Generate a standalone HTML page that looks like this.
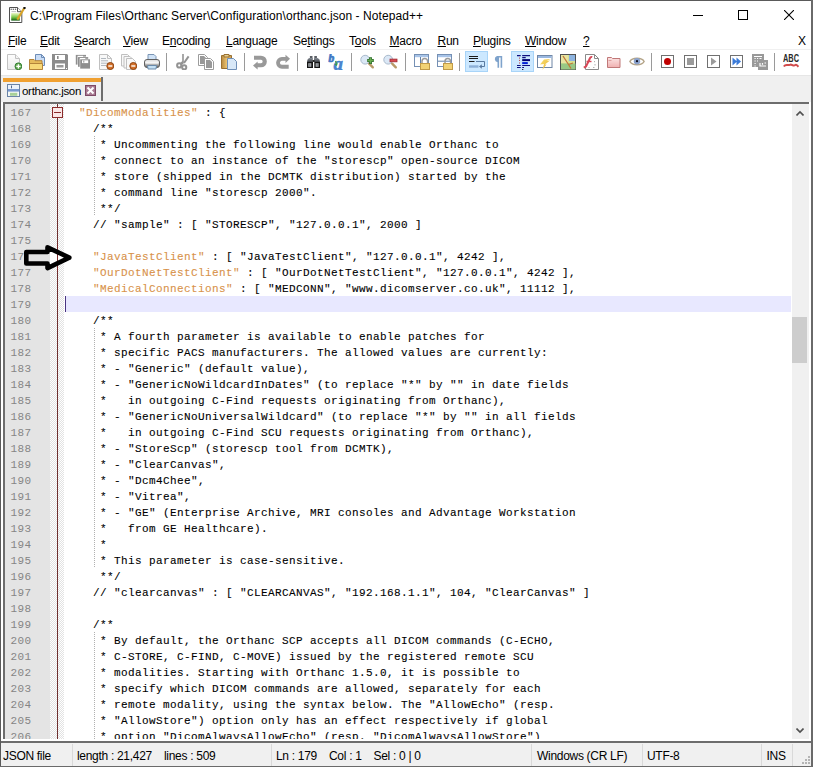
<!DOCTYPE html>
<html><head><meta charset="utf-8"><style>
*{margin:0;padding:0;box-sizing:border-box}
html,body{width:813px;height:767px;overflow:hidden;background:#fff}
body{position:relative;font-family:"Liberation Sans",sans-serif;font-size:12px;color:#000}
.abs{position:absolute}
.title{position:absolute;left:30px;top:6px;font-size:12px;letter-spacing:0.07px;line-height:20px;white-space:pre;color:#000}
.mi{position:absolute;top:32px;line-height:18px;font-size:12px;white-space:pre;letter-spacing:-0.25px}
.mi u{text-decoration:underline;text-underline-offset:1px}
.st{position:absolute;top:747px;line-height:18px;font-size:12px;letter-spacing:-0.3px;white-space:pre;color:#000}
.ssep{position:absolute;top:744px;width:1px;height:22px;background:#d9d9d9}
.ln{position:absolute;left:10.5px;width:40px;height:16px;font-family:"Liberation Mono",monospace;font-size:11px;line-height:16px;padding-top:1px;letter-spacing:0.4px;color:#858585;white-space:pre}
.cl{position:absolute;left:65px;height:16px;font-family:"Liberation Mono",monospace;font-size:11px;line-height:16px;padding-top:1px;letter-spacing:0.4px;color:#000;-webkit-text-stroke:0.1px currentColor;white-space:pre}
.k{color:#d8924a}
.guide{position:absolute;left:94px;width:1px;height:16px;background:repeating-linear-gradient(to bottom,#b0b0b0 0,#b0b0b0 1px,transparent 1px,transparent 2px)}
</style></head><body>
<!-- window border -->
<div class="abs" style="left:0;top:0;width:813px;height:1px;background:#5a5a5a"></div>
<div class="abs" style="left:0;top:0;width:1px;height:767px;background:#5a5a5a"></div>
<div class="abs" style="left:811px;top:0;width:2px;height:767px;background:#6a6a6a"></div>
<div class="abs" style="left:0;top:766px;width:813px;height:1px;background:#6a6a6a"></div>
<!-- title -->
<svg class="abs" style="left:9px;top:7px" width="17" height="17" viewBox="0 0 17 17">
 <defs><linearGradient id="gTi" x1="0" y1="0" x2="0" y2="1"><stop offset="0" stop-color="#eef8c8"/><stop offset="0.55" stop-color="#7cc84a"/><stop offset="1" stop-color="#0e5a0e"/></linearGradient></defs>
 <path d="M0.5 0.5 H8.5 L12.8 4.7 V15.5 H0.5 Z" fill="#fff" stroke="#505050"/>
 <path d="M8.5 0.5 V4.7 H12.8" fill="#fff" stroke="#505050"/>
 <circle cx="2.2" cy="2.3" r="0.75" fill="#606060"/><circle cx="4.3" cy="2.3" r="0.75" fill="#606060"/><circle cx="6.5" cy="2.3" r="0.75" fill="#606060"/>
 <path d="M2.5 4.6 H7" stroke="#c0c0c0"/>
 <rect x="2.2" y="5.9" width="8.6" height="7.7" fill="url(#gTi)"/>
 <path d="M8.3 12.6 L15.3 1" stroke="#d8a428" stroke-width="2.2"/>
 <circle cx="15.5" cy="0.9" r="1.2" fill="#111"/>
</svg>
<div class="title">C:\Program Files\Orthanc Server\Configuration\orthanc.json - Notepad++</div>
<div class="abs" style="left:693px;top:15px;width:10px;height:1px;background:#000"></div>
<div class="abs" style="left:738px;top:10px;width:10px;height:10px;border:1px solid #000"></div>
<svg class="abs" style="left:784px;top:10px" width="10" height="10" viewBox="0 0 10 10"><path d="M0 0L10 10M10 0L0 10" stroke="#000" stroke-width="1.1"/></svg>
<!-- menu -->
<div class="mi" style="left:8px"><u>F</u>ile</div>
<div class="mi" style="left:40px"><u>E</u>dit</div>
<div class="mi" style="left:74px"><u>S</u>earch</div>
<div class="mi" style="left:123px"><u>V</u>iew</div>
<div class="mi" style="left:162px">E<u>n</u>coding</div>
<div class="mi" style="left:226px"><u>L</u>anguage</div>
<div class="mi" style="left:293px">Se<u>t</u>tings</div>
<div class="mi" style="left:349px">T<u>o</u>ols</div>
<div class="mi" style="left:389.5px"><u>M</u>acro</div>
<div class="mi" style="left:437.5px"><u>R</u>un</div>
<div class="mi" style="left:473px"><u>P</u>lugins</div>
<div class="mi" style="left:525px"><u>W</u>indow</div>
<div class="mi" style="left:583px"><u>?</u></div>
<div class="abs" style="left:798px;top:32px;line-height:18px;font-size:12px">X</div>
<div class="abs" style="left:1px;top:49px;width:810px;height:1px;background:#f0f0f0"></div>
<!-- toolbar -->
<svg class="abs" style="left:6px;top:54px" width="16" height="16" viewBox="0 0 16 16">
<defs><linearGradient id="gNew" x1="0" y1="0" x2="0" y2="1"><stop offset="0" stop-color="#fdfdfd"/><stop offset="1" stop-color="#ececec"/></linearGradient></defs>
<path d="M1.5 0.5h8l4 4v11h-12z" fill="url(#gNew)" stroke="#c2c2c2"/>
<path d="M9.5 0.5v4h4" fill="#f4f4f4" stroke="#c2c2c2"/>
<circle cx="12.4" cy="12.3" r="3.4" fill="#6aae55" stroke="#2f7d32" stroke-width="1"/>
<path d="M12.4 10.2v4.2M10.3 12.3h4.2" stroke="#fff" stroke-width="1.3"/>
</svg>
<svg class="abs" style="left:29px;top:54px" width="16" height="16" viewBox="0 0 16 16">
<path d="M6.5 0.5h6l3 3v8h-9z" fill="#c9dcf5" stroke="#6d8db8"/>
<path d="M12.5 0.5v3h3" fill="none" stroke="#6d8db8"/>
<path d="M0.5 5.5h4.5l1 1.2h7v8.8h-12.5z" fill="#e6bc5c" stroke="#b4843a"/>
<path d="M0.5 9.5h13v6h-13z" fill="#f7d978" stroke="#b4843a"/>
</svg>
<svg class="abs" style="left:52px;top:54px" width="16" height="16" viewBox="0 0 16 16">
<path d="M0 0h15l1 1v15h-16z" fill="#8c8c8c"/>
<rect x="3" y="1" width="10" height="5" fill="#fff"/>
<rect x="5" y="2" width="1.6" height="3" fill="#8c8c8c"/>
<rect x="3" y="9.5" width="10" height="5.5" fill="#fff"/>
<rect x="4.5" y="11" width="7" height="2.5" fill="#9a9a9a"/>
<rect x="14" y="14" width="1" height="1" fill="#fff"/>
</svg>
<svg class="abs" style="left:75px;top:54px" width="16" height="16" viewBox="0 0 16 16">
<rect x="0.8" y="0.9" width="10.2" height="9.7" fill="#8e8e8e"/>
<rect x="2.6" y="1.8" width="5.5" height="1.3" fill="#fff"/>
<rect x="2.5" y="2.6" width="11.2" height="10.7" fill="#fff"/>
<rect x="3" y="3.1" width="10.2" height="9.7" fill="#8e8e8e"/>
<rect x="4.8" y="4" width="5.5" height="1.3" fill="#fff"/>
<rect x="4.7" y="4.8" width="11" height="10.5" fill="#fff"/>
<rect x="5.2" y="5.3" width="9.8" height="9.3" fill="#8e8e8e"/>
<rect x="7" y="6.3" width="6.2" height="2.8" fill="#fff"/>
<rect x="8.3" y="6.6" width="1" height="2" fill="#8e8e8e"/>
</svg>
<svg class="abs" style="left:98px;top:54px" width="16" height="16" viewBox="0 0 16 16">
<path d="M1.5 0.5h8l4 4v11h-12z" fill="#f8f8f8" stroke="#c0c0c0"/>
<path d="M9.5 0.5v4h4" fill="none" stroke="#c0c0c0"/>
<path d="M3 4.5h5M3 6.8h7M3 9.2h7M3 11.5h5" stroke="#a8b0b8" stroke-width="0.9"/>
<circle cx="12.3" cy="12" r="3.5" fill="#d2702a" stroke="#8f4410" stroke-width="1"/>
<path d="M10.3 12h4" stroke="#fff" stroke-width="1.4"/>
</svg>
<svg class="abs" style="left:121px;top:54px" width="16" height="16" viewBox="0 0 16 16">
<path d="M0.5 0.5h6l2.5 2.5v9h-8.5z" fill="#f8f8f8" stroke="#c0c0c0"/>
<path d="M3 2.5h6l2.5 2.5v9h-8.5z" fill="#f8f8f8" stroke="#c0c0c0"/>
<path d="M5.5 4.5h6l3 3v8h-9z" fill="#f8f8f8" stroke="#c0c0c0"/>
<circle cx="12.3" cy="12" r="3.5" fill="#d2702a" stroke="#8f4410" stroke-width="1"/>
<path d="M10.3 12h4" stroke="#fff" stroke-width="1.4"/>
</svg>
<svg class="abs" style="left:144px;top:54px" width="16" height="16" viewBox="0 0 16 16">
<defs><linearGradient id="gPr" x1="0" y1="0" x2="0" y2="1"><stop offset="0" stop-color="#d8d8d8"/><stop offset="0.35" stop-color="#f4f4f4"/><stop offset="0.7" stop-color="#a0a0a0"/><stop offset="1" stop-color="#606060"/></linearGradient></defs>
<path d="M4 0.5h6l2 2v5h-8z" fill="#cfe2f6" stroke="#7a94b4"/>
<rect x="0.5" y="5.5" width="15" height="8" rx="2.5" fill="url(#gPr)" stroke="#606060"/>
<rect x="2" y="8.5" width="12" height="1" fill="#ffffff" opacity="0.8"/>
<path d="M3.5 11.5h9l-0.5 3.5h-8z" fill="#c4e0f4" stroke="#6a8aaa"/>
</svg>
<svg class="abs" style="left:175px;top:54px" width="16" height="16" viewBox="0 0 16 16">
<path d="M8 0 V8.5" stroke="#939393" stroke-width="1.6"/>
<path d="M13.6 2.4 L9 9" stroke="#939393" stroke-width="2"/>
<path d="M8.2 8 L6 10" stroke="#939393" stroke-width="2.5"/>
<circle cx="4.2" cy="11.4" r="2.1" fill="none" stroke="#939393" stroke-width="2"/>
<circle cx="9.2" cy="13.3" r="2.1" fill="none" stroke="#939393" stroke-width="2"/>
</svg>
<svg class="abs" style="left:198px;top:54px" width="16" height="16" viewBox="0 0 16 16">
<path d="M0.5 0.5 H6.5 L9.5 3.5 V11.5 H0.5 Z" fill="#fff" stroke="#9c9c9c"/>
<path d="M2 2 H6 L8 4 V10 H2 Z" fill="#999"/>
<path d="M6.5 4.5 H12.5 L15.5 7.5 V15.5 H6.5 Z" fill="#fff" stroke="#9c9c9c"/>
<path d="M8 6 H12 L14 8 V14 H8 Z" fill="#999"/>
</svg>
<svg class="abs" style="left:221px;top:54px" width="16" height="16" viewBox="0 0 16 16">
<defs><linearGradient id="gCb" x1="0" y1="0" x2="1" y2="0"><stop offset="0" stop-color="#b88a40"/><stop offset="0.5" stop-color="#e8c070"/><stop offset="1" stop-color="#c89850"/></linearGradient></defs>
<path d="M0.5 1.5h10v13h-10z" fill="url(#gCb)" stroke="#9a7030"/>
<path d="M3 0.5h5v2.5h-5z" fill="#e8d090" stroke="#9a7030"/>
<path d="M6.5 4.5h6l3 3v8h-9z" fill="#d8e8f8" stroke="#7090b8"/>
</svg>
<svg class="abs" style="left:252px;top:54px" width="16" height="16" viewBox="0 0 16 16">
<path d="M2 3.75 H9 A3.75 3.75 0 0 1 9 11.25 H5" fill="none" stroke="#999" stroke-width="4.2"/>
<path d="M1 11.6 L5.6 7.6 V15.6 Z" fill="#999"/>
</svg>
<svg class="abs" style="left:275px;top:54px" width="16" height="16" viewBox="0 0 16 16">
<path d="M11 4.95 H6.9 A3.9 3.9 0 0 0 6.9 12.75 H13.7" fill="none" stroke="#999" stroke-width="3.8"/>
<path d="M15 4.8 L10.5 0.8 V8.9 Z" fill="#999"/>
</svg>
<svg class="abs" style="left:305px;top:54px" width="16" height="16" viewBox="0 0 16 16">
<defs><linearGradient id="gBn" x1="0" y1="0" x2="0" y2="1"><stop offset="0" stop-color="#8a9098"/><stop offset="1" stop-color="#3a3e44"/></linearGradient></defs>
<path d="M4.9 2h2.6v3h-2.6zM9.3 2h2.6v3h-2.6z" fill="#5a5e64"/>
<path d="M2.5 5.5 L4 4 H7.8 V8 H2 Z M9 4 H12.8 L14.5 5.5 L15 8 H9 Z" fill="url(#gBn)"/>
<path d="M7.5 6h2v2h-2z" fill="#2a2a2a"/>
<path d="M2 8h6v6h-6zM9.3 8h5.7v6h-5.7z" fill="#141414"/>
<rect x="3.3" y="9.2" width="3" height="3.6" fill="#b0b4b8"/>
<rect x="10.6" y="9.2" width="3" height="3.6" fill="#b0b4b8"/>
<rect x="4.3" y="9.2" width="1" height="3.6" fill="#707478"/>
<rect x="11.6" y="9.2" width="1" height="3.6" fill="#707478"/>
</svg>
<svg class="abs" style="left:328px;top:54px" width="16" height="16" viewBox="0 0 16 16">
<text x="0.6" y="7.7" font-family="Liberation Serif" font-style="italic" font-weight="bold" font-size="11.5" fill="#3f78c4" stroke="#3f78c4" stroke-width="0.7">b</text>
<text x="5.6" y="15.6" font-family="Liberation Serif" font-style="italic" font-weight="bold" font-size="19" fill="#4a86d0" stroke="#3c78c8" stroke-width="0.4">a</text>
<path d="M7.5 7 L8.6 9.8" stroke="#4aa050" stroke-width="1.4"/>
<path d="M6.2 10.6 L9.8 9.2 L8.8 12 Z" fill="#3e9a48"/>
</svg>
<svg class="abs" style="left:360px;top:54px" width="16" height="16" viewBox="0 0 16 16">
<circle cx="5.2" cy="5.7" r="4.4" fill="#dbe8f6" stroke="#a9b9cb" stroke-width="1"/>
<path d="M9.2 9.7 L12.8 13.3" stroke="#b89a68" stroke-width="2.4" stroke-linecap="round"/>
<path d="M7.2 6.6h6.6M10.5 3.3v6.6" stroke="#2f6e2f" stroke-width="3"/>
<path d="M7.8 6.6h5.4M10.5 3.9v5.4" stroke="#6aae50" stroke-width="1.5"/>
</svg>
<svg class="abs" style="left:383px;top:54px" width="16" height="16" viewBox="0 0 16 16">
<circle cx="5.2" cy="5.7" r="4.4" fill="#dbe8f6" stroke="#a9b9cb" stroke-width="1"/>
<path d="M9.2 9.7 L12.8 13.3" stroke="#b89a68" stroke-width="2.4" stroke-linecap="round"/>
<rect x="7" y="5.1" width="7" height="2.7" fill="#d84850" stroke="#a02830" stroke-width="0.8"/>
</svg>
<svg class="abs" style="left:414px;top:54px" width="16" height="16" viewBox="0 0 16 16">
<rect x="0.5" y="0.5" width="14" height="12" fill="#fff" stroke="#7590b4"/>
<rect x="1" y="1" width="13" height="2.2" fill="#a8c4e8"/>
<path d="M6.5 3v9.5" stroke="#6080a8"/>
<path d="M8 9 V7.2 A2.8 2.8 0 0 1 13.6 7.2 V9" fill="none" stroke="#9a9a9a" stroke-width="1.5"/>
<rect x="6.5" y="9.5" width="9" height="6" fill="#f2d274" stroke="#c09a48"/>
</svg>
<svg class="abs" style="left:437px;top:54px" width="16" height="16" viewBox="0 0 16 16">
<rect x="0.5" y="0.5" width="14" height="12" fill="#fff" stroke="#7590b4"/>
<rect x="1" y="1" width="13" height="2.2" fill="#a8c4e8"/>
<path d="M1 7.2h13.5" stroke="#6080a8"/>
<path d="M8 9 V7.2 A2.8 2.8 0 0 1 13.6 7.2 V9" fill="none" stroke="#9a9a9a" stroke-width="1.5"/>
<rect x="6.5" y="9.5" width="9" height="6" fill="#f2d274" stroke="#c09a48"/>
</svg>
<div class="abs" style="left:465px;top:51px;width:23px;height:21px;background:#cce8ff;border:1px solid #a8d4f8"></div>
<div class="abs" style="left:511px;top:51px;width:23px;height:21px;background:#cce8ff;border:1px solid #a8d4f8"></div>
<svg class="abs" style="left:467px;top:54px" width="19" height="16" viewBox="0 0 19 16">
<path d="M2 2.5h9M2 4.5h9M2 7.5h5.5" stroke="#1a1a1a" stroke-width="1"/>
<path d="M9 7.5h8.5V12.5H14" fill="none" stroke="#5a7aa0" stroke-width="1"/>
<path d="M12 12.5 L14.8 10.2 V14.8Z" fill="#5a7aa0"/>
<rect x="2" y="11.3" width="9.5" height="2.4" fill="#8cb0d8"/>
</svg>
<svg class="abs" style="left:491px;top:54px" width="16" height="16" viewBox="0 0 16 16">
<path d="M6 2h5.2v11.7h-1.6V3.5h-1.5v10.2H6.5V8.2 A3.2 3.2 0 0 1 6 2z" fill="#7fa3cc"/>
</svg>
<svg class="abs" style="left:514px;top:54px" width="16" height="16" viewBox="0 0 16 16">
<path d="M3 1.6h3.7M8.2 1.6h8.5M8.2 3.6h3.5M3 11.5h3.7M8.2 11.5h8.5M3 13.5h3.7M8.2 13.5h1.8" stroke="#101080" stroke-width="1.1"/>
<rect x="8.2" y="5.1" width="8.5" height="2" fill="#000070"/>
<rect x="8.2" y="8.1" width="5.6" height="2" fill="#0020d8"/>
<path d="M5.5 3.6v1M5.5 5.9v1M5.5 8.5v1" stroke="#c04040" stroke-width="1"/>
<rect x="8.1" y="15" width="1.2" height="1" fill="#101030"/>
</svg>
<svg class="abs" style="left:537px;top:54px" width="16" height="16" viewBox="0 0 16 16">
<defs><linearGradient id="gBolt" x1="0" y1="0" x2="1" y2="1"><stop offset="0" stop-color="#f8e070"/><stop offset="1" stop-color="#e8b030"/></linearGradient></defs>
<rect x="0.5" y="1.5" width="14.5" height="12" fill="#fff" stroke="#6f86a6"/>
<rect x="1" y="2" width="13.5" height="2" fill="#9ab8e0"/>
<path d="M13.5 5 L7 5.5 L3 10.5 L7 10 L5.5 15.8 L9.5 10.5 L7.8 10.5 L13 6.5 L9.5 7 Z" fill="url(#gBolt)"/>
</svg>
<svg class="abs" style="left:560px;top:54px" width="16" height="16" viewBox="0 0 16 16">
<rect x="0.5" y="0.5" width="15" height="15" fill="#d8e090" stroke="#505050"/>
<rect x="9" y="1" width="6" height="6" fill="#8eb4e0"/>
<rect x="1" y="9.5" width="14.5" height="6" fill="#98c884"/>
<rect x="1" y="1" width="7" height="8" fill="#e8e4a0"/>
<path d="M3 2 L8.5 10.5 L11 14.5 M8.5 10.5 L13 9" stroke="#c07838" stroke-width="1.3" fill="none"/>
</svg>
<svg class="abs" style="left:583px;top:54px" width="16" height="16" viewBox="0 0 16 16">
<path d="M2.5 0.5h9l4 4v11h-13z" fill="#fff" stroke="#8a8a8a"/>
<path d="M11.5 0.5v4h4" fill="none" stroke="#8a8a8a"/>
<path d="M9.2 3.2 C8 2.6 7.2 3.5 6.6 5 L3 12.5 L0.8 13.6" fill="none" stroke="#d84858" stroke-width="2"/>
<path d="M3.5 7.5h5" stroke="#d84858" stroke-width="1.4"/>
<path d="M11.5 7v1.2M12 10v1.5M10 13.5h1.5M5.5 13.5h1" stroke="#aaa" stroke-width="0.9"/>
</svg>
<svg class="abs" style="left:606px;top:54px" width="16" height="16" viewBox="0 0 16 16">
<defs><linearGradient id="gPk" x1="0" y1="0" x2="0" y2="1"><stop offset="0" stop-color="#fbe4e4"/><stop offset="1" stop-color="#f0b0b0"/></linearGradient></defs>
<path d="M1.5 3.5h4l1 1h7.5v9h-12.5z" fill="url(#gPk)" stroke="#c07878"/>
<path d="M2.5 6.5h3" stroke="#d89090" stroke-width="0.8"/>
</svg>
<svg class="abs" style="left:629px;top:54px" width="16" height="16" viewBox="0 0 16 16">
<path d="M0.9 7.5 C3 3.2 13 3.2 15.1 7.5 C13 11.8 3 11.8 0.9 7.5 Z" fill="#fff" stroke="#b4a488" stroke-width="1.5"/>
<circle cx="8" cy="7.3" r="3.2" fill="#8aa2cc"/>
<circle cx="8" cy="7.2" r="1.1" fill="#101020"/>
</svg>
<svg class="abs" style="left:660px;top:54px" width="16" height="16" viewBox="0 0 16 16"><rect x="1.5" y="1.5" width="12" height="12" fill="#fff" stroke="#707070"/><circle cx="7.5" cy="7.5" r="3.5" fill="#c00000"/></svg>
<svg class="abs" style="left:683px;top:54px" width="16" height="16" viewBox="0 0 16 16"><rect x="1.5" y="1.5" width="12" height="12" fill="#fff" stroke="#707070"/><rect x="4" y="4" width="7" height="7" fill="#9a9a9a"/></svg>
<svg class="abs" style="left:706px;top:54px" width="16" height="16" viewBox="0 0 16 16"><rect x="1.5" y="1.5" width="12" height="12" fill="#fff" stroke="#707070"/><path d="M5 3.5 L10.5 7.5 L5 11.5Z" fill="#9a9a9a"/></svg>
<svg class="abs" style="left:729px;top:54px" width="16" height="16" viewBox="0 0 16 16"><rect x="1.5" y="1.5" width="12" height="12" fill="#fff" stroke="#707070"/><path d="M3.5 3.5 L8 7.5 L3.5 11.5Z M7.5 3.5 L12 7.5 L7.5 11.5Z" fill="#3a7ad8"/></svg>
<svg class="abs" style="left:752px;top:54px" width="16" height="16" viewBox="0 0 16 16">
<rect x="0" y="0" width="12" height="13" fill="#999"/>
<path d="M2 2.5h8" stroke="#fff" stroke-width="1"/>
<path d="M2.5 4.5h1.2M5 4.5h1.2M7.5 4.5h2M2.5 7h1.2M2.5 9.5h1.2M2.5 12h1.2M5 7h1" stroke="#fff" stroke-width="1"/>
<rect x="6" y="6" width="10" height="10" fill="#999"/>
<path d="M8 9v3h6M10.5 9v1.8M12.5 9h1.5" stroke="#fff" stroke-width="1.2" fill="none"/>
</svg>
<svg class="abs" style="left:783px;top:54px" width="17" height="16" viewBox="0 0 17 16">
<text x="0" y="7.5" font-family="Liberation Sans" font-weight="bold" font-size="10.5" fill="#2a2a2a" textLength="16" lengthAdjust="spacingAndGlyphs">ABC</text>
<path d="M0.8 12.5 C2.5 9.8 4.5 11.8 6.8 10.8 C9 9.8 10.2 12.8 12.3 11 C13.5 10 14.5 11.8 15.5 12.8" fill="none" stroke="#d04a4a" stroke-width="2"/>
</svg>
<div class="abs" style="left:166px;top:53px;width:1px;height:18px;background:#9a9a9a"></div>
<div class="abs" style="left:244px;top:53px;width:1px;height:18px;background:#9a9a9a"></div>
<div class="abs" style="left:297px;top:53px;width:1px;height:18px;background:#9a9a9a"></div>
<div class="abs" style="left:351px;top:53px;width:1px;height:18px;background:#9a9a9a"></div>
<div class="abs" style="left:405px;top:53px;width:1px;height:18px;background:#9a9a9a"></div>
<div class="abs" style="left:459px;top:53px;width:1px;height:18px;background:#9a9a9a"></div>
<div class="abs" style="left:651px;top:53px;width:1px;height:18px;background:#9a9a9a"></div>
<div class="abs" style="left:774px;top:53px;width:1px;height:18px;background:#9a9a9a"></div>
<div class="abs" style="left:1px;top:75px;width:810px;height:1px;background:#e6e6e6"></div>
<!-- tab bar -->
<div class="abs" style="left:1px;top:76px;width:810px;height:26px;background:#f0f0f0"></div>
<div class="abs" style="left:3px;top:78px;width:98px;height:4px;background:#f0a030"></div>
<div class="abs" style="left:101px;top:77px;width:2px;height:24px;background:#6d6d6d"></div>
<svg class="abs" style="left:7px;top:84px" width="13" height="13" viewBox="0 0 13 13">
 <rect x="0.5" y="0.5" width="12" height="12" fill="#7898d0" stroke="#6a84a8"/>
 <rect x="1" y="1" width="11" height="4" fill="#eaf2fd"/>
 <rect x="4" y="1.5" width="1" height="2.8" fill="#506890"/>
 <rect x="1" y="7.6" width="11" height="4.4" fill="#f4f8f4"/>
 <rect x="3" y="8.8" width="7.3" height="3" fill="#a8d098"/>
</svg>
<div class="abs" style="left:22px;top:82px;line-height:18px;font-size:11.5px;letter-spacing:-0.3px;white-space:pre">orthanc.json</div>
<svg class="abs" style="left:85px;top:85px" width="11" height="11" viewBox="0 0 11 11">
 <rect x="0.5" y="0.5" width="10" height="10" fill="#a87a92" stroke="#7e4a66"/>
 <path d="M2.5 2.5L8.5 8.5M8.5 2.5L2.5 8.5" stroke="#fff" stroke-width="2"/>
</svg>
<!-- editor frame -->
<div class="abs" style="left:3px;top:102px;width:806px;height:2px;background:#6d6d6d"></div>
<div class="abs" style="left:3px;top:102px;width:2px;height:637px;background:#6d6d6d"></div>
<div class="abs" style="left:5px;top:739px;width:804px;height:2px;background:#fff"></div>
<div class="abs" style="left:809px;top:104px;width:2px;height:637px;background:#fff"></div>
<!-- gutter -->
<div class="abs" style="left:5px;top:104px;width:45px;height:635px;background:#e4e4e4"></div>
<div class="abs" style="left:50px;top:104px;width:14px;height:635px;background:repeating-conic-gradient(#e2e2e2 0 25%,#fff 0 50%) 0 0/2px 2px"></div>
<div class="abs" style="left:57px;top:104px;width:1px;height:635px;background:#6e3030"></div>
<svg class="abs" style="left:52px;top:107px" width="11" height="11" viewBox="0 0 11 11">
 <rect x="0.5" y="0.5" width="10" height="10" fill="#fbe8e8" stroke="#8b2c2c"/>
 <path d="M2 5.5h7" stroke="#8b2c2c"/>
</svg>
<!-- current line -->
<div class="abs" style="left:66px;top:296px;width:725px;height:16px;background:#e8e8ff"></div>
<div class="abs" style="left:65px;top:296px;width:1px;height:16px;background:#4a3480"></div>
<!-- code -->
<div class="abs" style="left:5px;top:104px;width:787px;height:635px;overflow:hidden">
<div style="position:absolute;left:-5px;top:-104px;width:813px;height:767px">
<div class="ln" style="top:104px">167</div>
<div class="cl" style="top:104px">  <span class="k">&quot;DicomModalities&quot;</span> : {</div>
<div class="ln" style="top:120px">168</div>
<div class="cl" style="top:120px">    /**</div>
<div class="ln" style="top:136px">169</div>
<div class="guide" style="top:136px"></div>
<div class="cl" style="top:136px">     * Uncommenting the following line would enable Orthanc to</div>
<div class="ln" style="top:152px">170</div>
<div class="guide" style="top:152px"></div>
<div class="cl" style="top:152px">     * connect to an instance of the &quot;storescp&quot; open-source DICOM</div>
<div class="ln" style="top:168px">171</div>
<div class="guide" style="top:168px"></div>
<div class="cl" style="top:168px">     * store (shipped in the DCMTK distribution) started by the</div>
<div class="ln" style="top:184px">172</div>
<div class="guide" style="top:184px"></div>
<div class="cl" style="top:184px">     * command line &quot;storescp 2000&quot;.</div>
<div class="ln" style="top:200px">173</div>
<div class="guide" style="top:200px"></div>
<div class="cl" style="top:200px">     **/</div>
<div class="ln" style="top:216px">174</div>
<div class="cl" style="top:216px">    // &quot;sample&quot; : [ &quot;STORESCP&quot;, &quot;127.0.0.1&quot;, 2000 ]</div>
<div class="ln" style="top:232px">175</div>
<div class="cl" style="top:232px"></div>
<div class="ln" style="top:248px">176</div>
<div class="cl" style="top:248px">    <span class="k">&quot;JavaTestClient&quot;</span> : [ &quot;JavaTestClient&quot;, &quot;127.0.0.1&quot;, 4242 ],</div>
<div class="ln" style="top:264px">177</div>
<div class="cl" style="top:264px">    <span class="k">&quot;OurDotNetTestClient&quot;</span> : [ &quot;OurDotNetTestClient&quot;, &quot;127.0.0.1&quot;, 4242 ],</div>
<div class="ln" style="top:280px">178</div>
<div class="cl" style="top:280px">    <span class="k">&quot;MedicalConnections&quot;</span> : [ &quot;MEDCONN&quot;, &quot;www.dicomserver.co.uk&quot;, 11112 ],</div>
<div class="ln" style="top:296px">179</div>
<div class="cl" style="top:296px"></div>
<div class="ln" style="top:312px">180</div>
<div class="cl" style="top:312px">    /**</div>
<div class="ln" style="top:328px">181</div>
<div class="guide" style="top:328px"></div>
<div class="cl" style="top:328px">     * A fourth parameter is available to enable patches for</div>
<div class="ln" style="top:344px">182</div>
<div class="guide" style="top:344px"></div>
<div class="cl" style="top:344px">     * specific PACS manufacturers. The allowed values are currently:</div>
<div class="ln" style="top:360px">183</div>
<div class="guide" style="top:360px"></div>
<div class="cl" style="top:360px">     * - &quot;Generic&quot; (default value),</div>
<div class="ln" style="top:376px">184</div>
<div class="guide" style="top:376px"></div>
<div class="cl" style="top:376px">     * - &quot;GenericNoWildcardInDates&quot; (to replace &quot;*&quot; by &quot;&quot; in date fields</div>
<div class="ln" style="top:392px">185</div>
<div class="guide" style="top:392px"></div>
<div class="cl" style="top:392px">     *   in outgoing C-Find requests originating from Orthanc),</div>
<div class="ln" style="top:408px">186</div>
<div class="guide" style="top:408px"></div>
<div class="cl" style="top:408px">     * - &quot;GenericNoUniversalWildcard&quot; (to replace &quot;*&quot; by &quot;&quot; in all fields</div>
<div class="ln" style="top:424px">187</div>
<div class="guide" style="top:424px"></div>
<div class="cl" style="top:424px">     *   in outgoing C-Find SCU requests originating from Orthanc),</div>
<div class="ln" style="top:440px">188</div>
<div class="guide" style="top:440px"></div>
<div class="cl" style="top:440px">     * - &quot;StoreScp&quot; (storescp tool from DCMTK),</div>
<div class="ln" style="top:456px">189</div>
<div class="guide" style="top:456px"></div>
<div class="cl" style="top:456px">     * - &quot;ClearCanvas&quot;,</div>
<div class="ln" style="top:472px">190</div>
<div class="guide" style="top:472px"></div>
<div class="cl" style="top:472px">     * - &quot;Dcm4Chee&quot;,</div>
<div class="ln" style="top:488px">191</div>
<div class="guide" style="top:488px"></div>
<div class="cl" style="top:488px">     * - &quot;Vitrea&quot;,</div>
<div class="ln" style="top:504px">192</div>
<div class="guide" style="top:504px"></div>
<div class="cl" style="top:504px">     * - &quot;GE&quot; (Enterprise Archive, MRI consoles and Advantage Workstation</div>
<div class="ln" style="top:520px">193</div>
<div class="guide" style="top:520px"></div>
<div class="cl" style="top:520px">     *   from GE Healthcare).</div>
<div class="ln" style="top:536px">194</div>
<div class="guide" style="top:536px"></div>
<div class="cl" style="top:536px">     *</div>
<div class="ln" style="top:552px">195</div>
<div class="guide" style="top:552px"></div>
<div class="cl" style="top:552px">     * This parameter is case-sensitive.</div>
<div class="ln" style="top:568px">196</div>
<div class="cl" style="top:568px">     **/</div>
<div class="ln" style="top:584px">197</div>
<div class="cl" style="top:584px">    // &quot;clearcanvas&quot; : [ &quot;CLEARCANVAS&quot;, &quot;192.168.1.1&quot;, 104, &quot;ClearCanvas&quot; ]</div>
<div class="ln" style="top:600px">198</div>
<div class="cl" style="top:600px"></div>
<div class="ln" style="top:616px">199</div>
<div class="cl" style="top:616px">    /**</div>
<div class="ln" style="top:632px">200</div>
<div class="guide" style="top:632px"></div>
<div class="cl" style="top:632px">     * By default, the Orthanc SCP accepts all DICOM commands (C-ECHO,</div>
<div class="ln" style="top:648px">201</div>
<div class="guide" style="top:648px"></div>
<div class="cl" style="top:648px">     * C-STORE, C-FIND, C-MOVE) issued by the registered remote SCU</div>
<div class="ln" style="top:664px">202</div>
<div class="guide" style="top:664px"></div>
<div class="cl" style="top:664px">     * modalities. Starting with Orthanc 1.5.0, it is possible to</div>
<div class="ln" style="top:680px">203</div>
<div class="guide" style="top:680px"></div>
<div class="cl" style="top:680px">     * specify which DICOM commands are allowed, separately for each</div>
<div class="ln" style="top:696px">204</div>
<div class="guide" style="top:696px"></div>
<div class="cl" style="top:696px">     * remote modality, using the syntax below. The &quot;AllowEcho&quot; (resp.</div>
<div class="ln" style="top:712px">205</div>
<div class="guide" style="top:712px"></div>
<div class="cl" style="top:712px">     * &quot;AllowStore&quot;) option only has an effect respectively if global</div>
<div class="ln" style="top:728px">206</div>
<div class="guide" style="top:728px"></div>
<div class="cl" style="top:728px">     * option &quot;DicomAlwaysAllowEcho&quot; (resp. &quot;DicomAlwaysAllowStore&quot;)</div>
</div></div>
<!-- scrollbar -->
<div class="abs" style="left:792px;top:104px;width:17px;height:635px;background:#f0f0f0"></div>
<svg class="abs" style="left:796px;top:110px" width="8" height="6" viewBox="0 0 8 6"><path d="M0.5 5.5L4 2L7.5 5.5" fill="none" stroke="#505050" stroke-width="1.6"/></svg>
<svg class="abs" style="left:796px;top:728px" width="8" height="6" viewBox="0 0 8 6"><path d="M0.5 0.5L4 4L7.5 0.5" fill="none" stroke="#505050" stroke-width="1.6"/></svg>
<div class="abs" style="left:792px;top:317px;width:15px;height:46px;background:#cdcdcd"></div>
<!-- status bar -->
<div class="abs" style="left:1px;top:741px;width:810px;height:2px;background:#6d6d6d"></div>
<div class="abs" style="left:1px;top:743px;width:810px;height:23px;background:#f0f0f0"></div>
<div class="ssep" style="left:71.5px"></div>
<div class="ssep" style="left:271px"></div>
<div class="ssep" style="left:531px"></div>
<div class="ssep" style="left:641.5px"></div>
<div class="ssep" style="left:761px"></div>
<div class="ssep" style="left:792px"></div>
<div class="st" style="left:3px">JSON file</div>
<div class="st" style="left:77px">length : 21,427</div>
<div class="st" style="left:164px">lines : 509</div>
<div class="st" style="left:276px">Ln : 179</div>
<div class="st" style="left:329px">Col : 1</div>
<div class="st" style="left:373.5px">Sel : 0 | 0</div>
<div class="st" style="left:537px">Windows (CR LF)</div>
<div class="st" style="left:647px">UTF-8</div>
<div class="st" style="left:766.5px">INS</div>
<div class="abs" style="left:808px;top:756px;width:2px;height:2px;background:#b4b4b4"></div>
<div class="abs" style="left:805px;top:759px;width:2px;height:2px;background:#b4b4b4"></div>
<div class="abs" style="left:808px;top:759px;width:2px;height:2px;background:#b4b4b4"></div>
<div class="abs" style="left:802px;top:762px;width:2px;height:2px;background:#b4b4b4"></div>
<div class="abs" style="left:805px;top:762px;width:2px;height:2px;background:#b4b4b4"></div>
<div class="abs" style="left:808px;top:762px;width:2px;height:2px;background:#b4b4b4"></div>
<!-- arrow annotation -->
<svg class="abs" style="left:0;top:230px" width="90" height="50" viewBox="0 230 90 50">
 <defs><clipPath id="cpG"><rect x="0" y="230" width="50" height="50"/></clipPath></defs>
 <path id="arr" d="M26.3 252 H47.5 V247.3 L69.3 257.7 L47.5 268.1 V263.5 H26.3 Z" fill="#fff"/>
 <path d="M26.3 252 H47.5 V247.3 L69.3 257.7 L47.5 268.1 V263.5 H26.3 Z" fill="#e2e2e2" clip-path="url(#cpG)"/>
 <rect x="57" y="244" width="1" height="28" fill="#7a2a2a"/>
 <path d="M26.3 252 H47.5 V247.3 L69.3 257.7 L47.5 268.1 V263.5 H26.3 Z" fill="none" stroke="#000" stroke-width="4.6" stroke-linejoin="round"/>
</svg>
</body></html>
